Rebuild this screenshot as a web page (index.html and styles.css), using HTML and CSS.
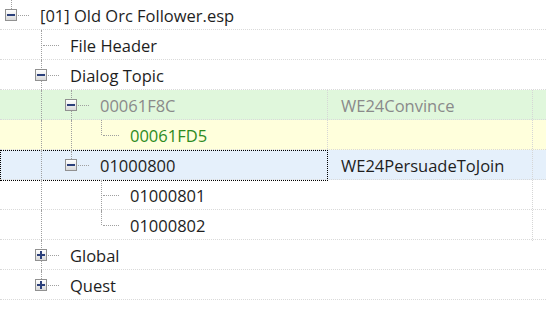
FILE: index.html
```html
<!DOCTYPE html>
<html lang="en">
  <head>
    <meta charset="UTF-8" />
    <title>Plugin Tree</title>
    <link rel="stylesheet" href="styles.css">
  </head>
  <body>
    <div class="tree">
      <div class="row">
        <div class="name">
          <span class="g l"><i class="box minus"></i></span>
          <span class="label">[01] Old Orc Follower.esp</span>
        </div>
        <div class="cell"></div>
        <div class="cell"></div>
      </div>

      <div class="row">
        <div class="name">
          <span class="g"></span>
          <span class="g t leaf"></span>
          <span class="label">File Header</span>
        </div>
        <div class="cell"></div>
        <div class="cell"></div>
      </div>

      <div class="row">
        <div class="name">
          <span class="g"></span>
          <span class="g t"><i class="box minus"></i></span>
          <span class="label">Dialog Topic</span>
        </div>
        <div class="cell"></div>
        <div class="cell"></div>
      </div>

      <div class="row rec green">
        <div class="name">
          <span class="g"></span>
          <span class="g v"></span>
          <span class="g t"><i class="box minus"></i></span>
          <span class="label muted">00061F8C</span>
        </div>
        <div class="cell split muted">WE24Convince</div>
        <div class="cell"></div>
      </div>

      <div class="row rec yellow">
        <div class="name">
          <span class="g"></span>
          <span class="g v"></span>
          <span class="g v"></span>
          <span class="g l leaf"></span>
          <span class="label new">00061FD5</span>
        </div>
        <div class="cell split"></div>
        <div class="cell"></div>
      </div>

      <div class="row rec blue sel">
        <div class="name">
          <span class="g"></span>
          <span class="g v"></span>
          <span class="g l"><i class="box minus"></i></span>
          <span class="label">01000800</span>
        </div>
        <div class="cell split">WE24PersuadeToJoin</div>
        <div class="cell"></div>
      </div>

      <div class="row">
        <div class="name">
          <span class="g"></span>
          <span class="g v"></span>
          <span class="g"></span>
          <span class="g t leaf"></span>
          <span class="label">01000801</span>
        </div>
        <div class="cell split"></div>
        <div class="cell"></div>
      </div>

      <div class="row">
        <div class="name">
          <span class="g"></span>
          <span class="g v"></span>
          <span class="g"></span>
          <span class="g l leaf"></span>
          <span class="label">01000802</span>
        </div>
        <div class="cell split"></div>
        <div class="cell"></div>
      </div>

      <div class="row">
        <div class="name">
          <span class="g"></span>
          <span class="g t"><i class="box plus"></i></span>
          <span class="label">Global</span>
        </div>
        <div class="cell"></div>
        <div class="cell"></div>
      </div>

      <div class="row">
        <div class="name">
          <span class="g"></span>
          <span class="g l"><i class="box plus"></i></span>
          <span class="label">Quest</span>
        </div>
        <div class="cell"></div>
        <div class="cell"></div>
      </div>

      <div class="row last">
        <div class="name"></div>
        <div class="cell"></div>
        <div class="cell"></div>
      </div>
    </div>
  </body>
</html>
```

FILE: styles.css
```css
body {
  margin: 0;
  background: #fff;
  font-family: "Open Sans", sans-serif;
  font-size: 16.5px;
  color: #1e1e1e;
  overflow: hidden;
}

.tree {
  width: 546px;
  height: 310px;
  overflow: hidden;
}

.row {
  display: grid;
  grid-template-columns: 328px 205px 1fr;
  height: 30px;
  box-sizing: border-box;
  border-bottom: 1px dotted #dadada;
}

.row.green {
  background: #e0f7dc;
}

.row.yellow {
  background: #ffffdc;
}

.row.blue {
  background: #e5f0fb;
}

.name {
  display: flex;
  min-width: 0;
  border-right: 1px solid transparent;
}

.rec .name {
  border-right: 1px dotted #d6d6d6;
}

.sel .name {
  outline: 1px dotted #000;
  outline-offset: -1px;
}

.cell {
  padding-left: 13px;
  line-height: 31px;
  white-space: nowrap;
}

.cell.split {
  border-right: 1px dotted #d6d6d6;
}

.label {
  padding-left: 10px;
  line-height: 31px;
  white-space: nowrap;
}

.muted {
  color: #8a8a8a;
}

.new {
  color: #2e8b1e;
}

/* tree guides */
.g {
  flex: none;
  width: 30px;
  position: relative;
}

.g.v::before,
.g.t::before,
.g.l::before {
  content: "";
  position: absolute;
  left: 11px;
  top: 0;
  bottom: -1px;
  border-left: 1px dotted #a0a0a0;
}

.g.l::before {
  bottom: auto;
  height: 15px;
}

.g.t::after,
.g.l::after {
  content: "";
  position: absolute;
  left: 13px;
  top: 15px;
  width: 16px;
  border-top: 1px dotted #a0a0a0;
}

.box {
  position: absolute;
  left: 5px;
  top: 9px;
  width: 10px;
  height: 10px;
  border: 1px solid #919191;
  background: linear-gradient(#ffffff, #d8d8d8);
  z-index: 1;
}

.box::before {
  content: "";
  position: absolute;
  left: 1px;
  top: 4px;
  width: 8px;
  height: 2px;
  background: #2b3f7a;
}

.box.plus::after {
  content: "";
  position: absolute;
  left: 4px;
  top: 1px;
  width: 2px;
  height: 8px;
  background: #2b3f7a;
}
```
